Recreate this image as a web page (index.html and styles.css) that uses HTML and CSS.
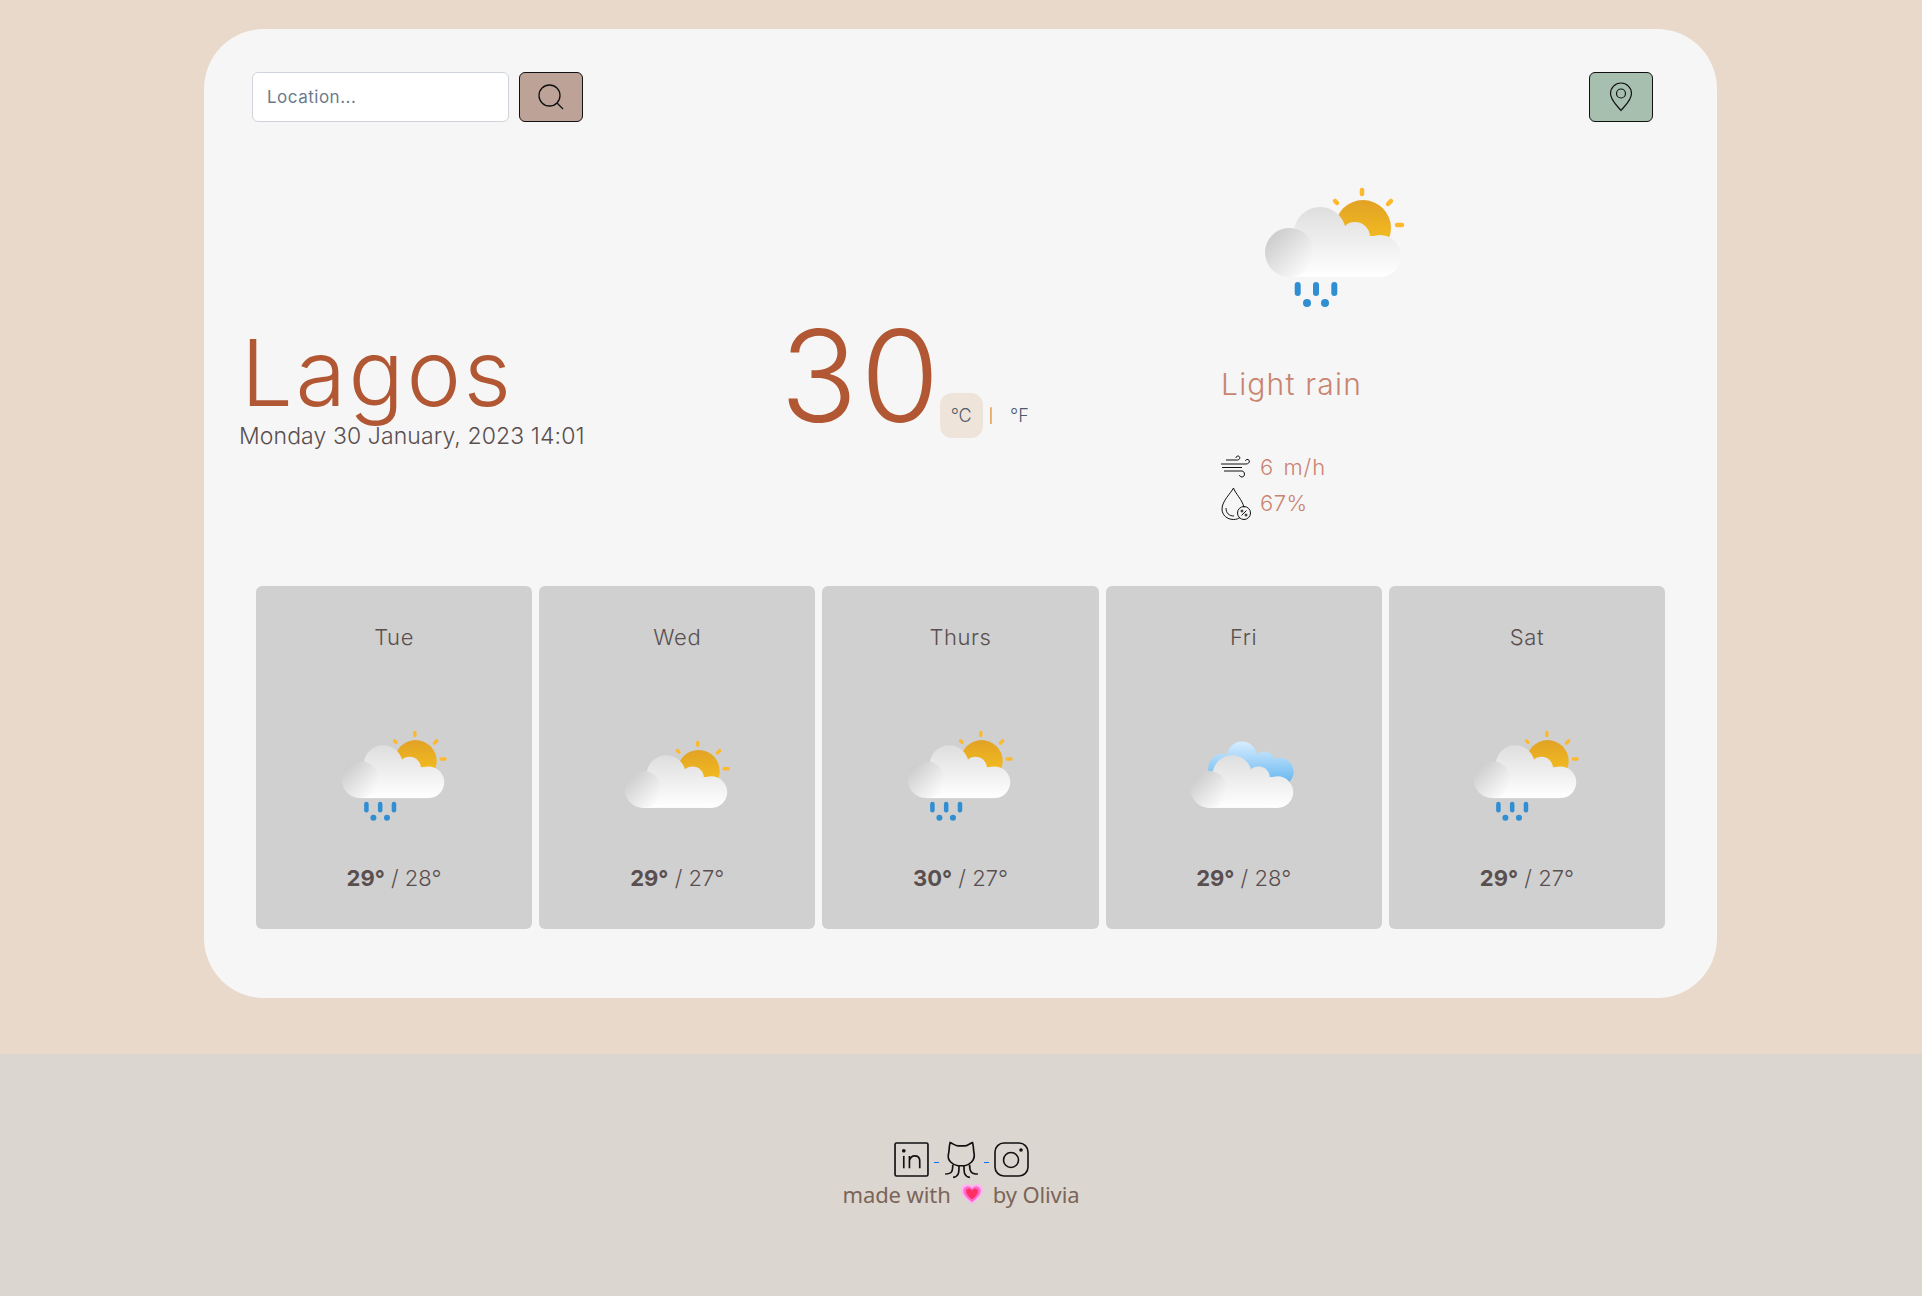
FILE: index.html
```html
<!DOCTYPE html>
<html lang="en">
<head>
    <meta charset="UTF-8">
    <meta name="viewport" content="width=device-width, initial-scale=1.0">
    <title>Weather App</title>
    <link rel="stylesheet" href="styles.css">
</head>
<body>

    <!-- Shared weather artwork -->
    <svg class="sprites" aria-hidden="true">
        <defs>
            <linearGradient id="cloud-fill" gradientUnits="userSpaceOnUse" x1="0" y1="37" x2="0" y2="107">
                <stop offset="0" stop-color="#dedede"/>
                <stop offset="1" stop-color="#ffffff"/>
            </linearGradient>
            <linearGradient id="puff-fill" x1="0.1" y1="0.1" x2="0.85" y2="0.85">
                <stop offset="0" stop-color="#cacaca"/>
                <stop offset="1" stop-color="#fafafa"/>
            </linearGradient>
            <linearGradient id="sun-fill" x1="0" y1="0" x2="0" y2="1">
                <stop offset="0" stop-color="#e2a225"/>
                <stop offset="1" stop-color="#f8c51e"/>
            </linearGradient>
            <linearGradient id="sky-fill" gradientUnits="userSpaceOnUse" x1="0" y1="20" x2="0" y2="78">
                <stop offset="0" stop-color="#d4ecff"/>
                <stop offset="1" stop-color="#5fb3ee"/>
            </linearGradient>
            <symbol id="cloud" overflow="visible">
                <g fill="url(#cloud-fill)">
                    <circle cx="80" cy="63" r="26"/>
                    <circle cx="115" cy="67" r="15"/>
                    <circle cx="140" cy="86" r="21"/>
                    <rect x="49" y="66" width="91" height="41"/>
                </g>
                <circle cx="49.500" cy="82.500" r="24.500" fill="url(#puff-fill)"/>
            </symbol>
            <symbol id="sun" overflow="visible">
                <circle cx="123" cy="58" r="28" fill="url(#sun-fill)"/>
                <g stroke="#fdb92b" stroke-width="4.500" stroke-linecap="round">
                    <path d="M122 20v4"/>
                    <path d="M157 55h5"/>
                    <path d="M148 34l3-3"/>
                    <path d="M95 31l2 2"/>
                </g>
            </symbol>
            <symbol id="rain" overflow="visible">
                <g stroke="#2f8fd2" stroke-width="6" stroke-linecap="round">
                    <path d="M57.700 115v8"/>
                    <path d="M76 115v8"/>
                    <path d="M94.300 115v8"/>
                </g>
                <circle cx="67" cy="133" r="4" fill="#2f8fd2"/>
                <circle cx="85" cy="133" r="4" fill="#2f8fd2"/>
            </symbol>
            <symbol id="sky" overflow="visible">
                <g fill="url(#sky-fill)">
                    <circle cx="93" cy="39" r="20"/>
                    <circle cx="123" cy="46" r="14"/>
                    <circle cx="143" cy="59" r="18.500"/>
                    <circle cx="68" cy="55" r="20"/>
                    <path d="M70 50h70l19 15-5 15H60z"/>
                </g>
            </symbol>
        </defs>
    </svg>

    <main class="page">
        <section class="weather-card">

            <!-- Search -->
            <div class="top-bar">
                <form class="search-form">
                    <input class="search-input" type="text" placeholder="Location...">
                    <button class="icon-button search-button" type="button" aria-label="Search">
                        <svg class="button-icon" viewBox="0 0 26 26" fill="none" stroke="#111" stroke-width="1.300">
                            <circle cx="11.500" cy="11.500" r="10.500"/>
                            <path d="M19 19l6 6"/>
                        </svg>
                    </button>
                </form>
                <button class="icon-button location-button" type="button" aria-label="Current location">
                    <svg class="pin-icon" viewBox="0 0 24 30" fill="none" stroke="#111" stroke-width="1.200">
                        <path d="M12 28.500C9 24.500 1.500 18.500 1.500 11.500a10.500 10.500 0 0 1 21 0C22.500 18.500 15 24.500 12 28.500z"/>
                        <circle cx="12" cy="11.500" r="4.500"/>
                    </svg>
                </button>
            </div>

            <!-- Current weather -->
            <div class="current">
                <div class="city-col">
                    <h1 class="city">Lagos</h1>
                    <p class="date">Monday 30 January, 2023 14:01</p>
                </div>
                <div class="temp-col">
                    <span class="temp">30</span>
                    <div class="units">
                        <span class="unit unit-active">°C</span>
                        <span class="unit-divider">|</span>
                        <span class="unit">°F</span>
                    </div>
                </div>
                <div class="condition-col">
                    <svg class="weather-icon main-icon" viewBox="20 10 150 130">
                        <use href="#sun"/><use href="#cloud"/><use href="#rain"/>
                    </svg>
                    <p class="condition">Light rain</p>
                    <div class="stats">
                        <div class="stat">
                            <svg class="stat-icon" viewBox="0 0 30 24" fill="none" stroke="#111" stroke-width="1">
                                <path d="M5 5h11.500c3 0 3-4 .5-4-1.500 0-2 1-2 2"/>
                                <path d="M0 9h25c3.500 0 4.500-3.500 2-4.500-1.500-.5-2.500.5-2.500 1.500"/>
                                <path d="M1 12.500h20"/>
                                <path d="M3 16h18c3 0 3.500 6 0 6-1.500 0-2.500-1-2.500-2"/>
                            </svg>
                            <span class="stat-wind">6 m/h</span>
                        </div>
                        <div class="stat">
                            <svg class="stat-icon drop-icon" viewBox="0 0 30 33" fill="none" stroke="#111" stroke-width="1">
                                <path d="M23 20.500C21.500 13 14 6 12.500 1 10 6 1 14 1 22c0 6 5 10.500 11.500 10.500 3 0 5-1 6.500-2"/>
                                <path d="M5 21c0 5 3 8 8 8"/>
                                <circle cx="23" cy="26" r="6.500"/>
                                <path d="M20.500 28.500l5-5"/>
                                <circle cx="21" cy="24" r="1"/>
                                <circle cx="25" cy="28" r="1"/>
                            </svg>
                            <span>67%</span>
                        </div>
                    </div>
                </div>
            </div>

            <!-- Five day forecast -->
            <div class="forecast">
                <div class="day-card">
                    <p class="day-name">Tue</p>
                    <svg class="weather-icon day-icon" viewBox="20 10 150 130"><use href="#sun"/><use href="#cloud"/><use href="#rain"/></svg>
                    <p class="day-temp"><strong>29°</strong> / 28°</p>
                </div>
                <div class="day-card">
                    <p class="day-name">Wed</p>
                    <svg class="weather-icon day-icon" viewBox="20 -3 150 130"><use href="#sun"/><use href="#cloud"/></svg>
                    <p class="day-temp"><strong>29°</strong> / 27°</p>
                </div>
                <div class="day-card">
                    <p class="day-name">Thurs</p>
                    <svg class="weather-icon day-icon" viewBox="20 10 150 130"><use href="#sun"/><use href="#cloud"/><use href="#rain"/></svg>
                    <p class="day-temp"><strong>30°</strong> / 27°</p>
                </div>
                <div class="day-card">
                    <p class="day-name">Fri</p>
                    <svg class="weather-icon day-icon" viewBox="20 -3 150 130"><use href="#sky"/><use href="#cloud"/></svg>
                    <p class="day-temp"><strong>29°</strong> / 28°</p>
                </div>
                <div class="day-card">
                    <p class="day-name">Sat</p>
                    <svg class="weather-icon day-icon" viewBox="20 10 150 130"><use href="#sun"/><use href="#cloud"/><use href="#rain"/></svg>
                    <p class="day-temp"><strong>29°</strong> / 27°</p>
                </div>
            </div>
        </section>
    </main>

    <!-- Footer -->
    <footer class="footer">
        <div class="socials">
            <a href="#" aria-label="LinkedIn">
                <svg class="social-icon" viewBox="0 0 34 34" fill="none" stroke="#111" stroke-width="1.600">
                    <rect x="1" y="1" width="32" height="32" rx="1.500"/>
                    <path d="M9.500 13.500v12"/>
                    <circle cx="9.500" cy="8.500" r="1" fill="#111"/>
                    <path d="M15 25.500v-12M15 18c1-3 3-4.500 5-4.500 3 0 5 1.500 5 5v7"/>
                </svg>
            </a>
            <span class="social-sep"></span>
            <a href="#" aria-label="GitHub">
                <svg class="social-icon github-icon" viewBox="370 62 105 118" fill="none" stroke="#111" stroke-width="5">
                    <path d="M388 70c7 2 17 10 24 10h20c8 0 16-8 24-10 4 15 2 25 5 35 2 20-16 33-29 35h-20c-14-2-34-15-29-35 3-10 1-20 5-35z"/>
                    <path d="M396 137c0 18-1 28-23 28"/>
                    <path d="M415 140c0 20 0 33-18 35"/>
                    <path d="M430 140c0 20 0 33 18 35"/>
                    <path d="M447 137c0 18 3 28 25 28"/>
                </svg>
            </a>
            <span class="social-sep"></span>
            <a href="#" aria-label="Instagram">
                <svg class="social-icon" viewBox="0 0 35 35" fill="none" stroke="#111" stroke-width="1.600">
                    <rect x="1" y="1" width="33" height="33" rx="9"/>
                    <circle cx="17" cy="18" r="7.500"/>
                    <circle cx="27" cy="8" r="1" fill="#111"/>
                </svg>
            </a>
        </div>
        <p class="credit">
            made with
            <svg class="heart" viewBox="0 0 24 22">
                <path d="M12 22C5 16 0 12 0 6.500 0 2.500 3 0 6.500 0 9 0 11 1.200 12 3c1-1.800 3-3 5.500-3C21 0 24 2.500 24 6.500 24 12 19 16 12 22z" fill="#ffb4f2"/>
                <path d="M12 20C7 16 2.500 12 2.500 7.500 2.500 4.300 5 2.500 7.500 2.500 9.500 2.500 11 3.500 12 5.500c1-2 2.500-3 4.500-3 2.500 0 5 1.800 5 5 0 4.500-4.500 8.500-9.500 12.500z" fill="#ff68c8"/>
                <path d="M12 17C8 14 5.500 11 5.500 8c0-1.900 1.400-3 3-3 1.500 0 2.800 1 3.500 2.500C12.700 6 14 5 15.500 5c1.600 0 3 1.100 3 3 0 3-2.500 6-6.500 9z" fill="#ff2f63"/>
            </svg>
            by Olivia
        </p>
    </footer>

</body>
</html>
```

FILE: styles.css
```css
/* Page */
body {
    margin: 0;
    background-color: #e9d9ca;
    font-family: "Inter", "Liberation Sans", sans-serif;
    color: #5a4f4f;
}

p, h1 {
    margin: 0;
}

.sprites {
    position: absolute;
    width: 0;
    height: 0;
}

.page {
    padding: 29px 205px 56px 204px;
}

.weather-card {
    height: 969px;
    box-sizing: border-box;
    padding: 43px 52px 0;
    background-color: #f6f6f6;
    border-radius: 60px;
}

/* Search */
.top-bar {
    display: flex;
    justify-content: space-between;
    margin-left: -4px;
    padding-right: 12px;
}

.search-form {
    display: flex;
    gap: 10px;
}

.search-input {
    width: 257px;
    height: 50px;
    box-sizing: border-box;
    padding: 0 14px;
    background-color: #ffffff;
    border: 1px solid #ced4da;
    border-radius: 6px;
    font-family: "Inter", sans-serif;
    font-size: 17px;
    letter-spacing: 0.5px;
}

.search-input::placeholder {
    color: #6c7a8d;
}

.icon-button {
    display: flex;
    align-items: center;
    justify-content: center;
    width: 64px;
    height: 50px;
    padding: 0;
    border: 1px solid #111111;
    border-radius: 6px;
}

.search-button {
    background-color: #bca297;
}

.location-button {
    background-color: #a6bfae;
}

.button-icon {
    width: 26px;
    height: 26px;
}

.pin-icon {
    width: 24px;
    height: 30px;
}

/* Current weather */
.current {
    display: grid;
    grid-template-columns: 541px 441px 1fr;
    height: 464px;
    margin-left: -17px;
}

.city-col {
    padding-top: 203px;
}

.city {
    margin-left: 2px;
    font-size: 92px;
    font-weight: 300;
    line-height: 96px;
    letter-spacing: 2.500px;
    color: #b15733;
}

.date {
    font-size: 23px;
    font-weight: 300;
    line-height: 30px;
    letter-spacing: 0.1px;
    white-space: nowrap;
}

.temp-col {
    display: flex;
    align-items: flex-end;
    height: 316px;
}

.temp {
    margin: 0 -3px -3px 0;
    font-size: 128px;
    font-weight: 300;
    line-height: 130px;
    letter-spacing: 3px;
    color: #b15733;
}

.units {
    display: flex;
    align-items: center;
    font-size: 18px;
    font-weight: 300;
    color: #4f5b6b;
}

.unit {
    padding: 12px 11px;
}

.unit-active {
    background-color: #efe4da;
    border-radius: 12px;
}

.unit-divider {
    margin: 0 6px;
    font-size: 14px;
    color: #b15733;
}

.condition-col {
    padding-top: 58px;
}

.weather-icon {
    filter: blur(0.4px);
}

.main-icon {
    display: block;
    width: 150px;
    height: 130px;
    margin-left: 39px;
}

.condition {
    margin-top: 56px;
    font-size: 30px;
    font-weight: 300;
    line-height: 36px;
    letter-spacing: 1.200px;
    color: #c98471;
}

.stats {
    margin-top: 47px;
}

.stat {
    display: flex;
    align-items: center;
    gap: 9px;
    height: 36px;
    font-size: 22px;
    font-weight: 300;
    letter-spacing: 0.5px;
    color: #c98471;
}

.stat-wind {
    letter-spacing: 1px;
    word-spacing: 2px;
}

.stat-icon {
    width: 30px;
    height: 24px;
}

.drop-icon {
    height: 33px;
}

/* Forecast */
.forecast {
    display: grid;
    grid-template-columns: repeat(5, 1fr);
    gap: 7px;
    width: 1409px;
}

.day-card {
    display: flex;
    flex-direction: column;
    align-items: center;
    height: 343px;
    background-color: #d0d0d0;
    border-radius: 6px;
}

.day-name {
    margin-top: 37px;
    font-size: 22px;
    font-weight: 300;
    line-height: 28px;
    letter-spacing: 0.6px;
}

.day-icon {
    width: 113px;
    height: 98px;
    margin-top: 74px;
}

.day-temp {
    margin-top: 40px;
    font-size: 22px;
    font-weight: 300;
    line-height: 30px;
}

.day-temp strong {
    font-weight: 700;
}

/* Footer */
.footer {
    display: flex;
    flex-direction: column;
    align-items: center;
    height: 242px;
    box-sizing: border-box;
    padding-top: 85px;
    background-color: #dbd6d0;
}

.socials {
    display: flex;
    align-items: center;
    height: 40px;
}

.social-icon {
    display: block;
    width: 35px;
    height: 35px;
}

.github-icon {
    height: 39px;
}

.social-sep {
    width: 5px;
    height: 1px;
    margin: 6px 5px 0;
    background-color: #0d6efd;
}

.credit {
    display: flex;
    align-items: center;
    gap: 10px;
    font-family: "Noto Sans", sans-serif;
    font-size: 22px;
    line-height: 30px;
    letter-spacing: -0.1px;
    color: #7b6558;
}

.heart {
    width: 22px;
    height: 20px;
}
```
